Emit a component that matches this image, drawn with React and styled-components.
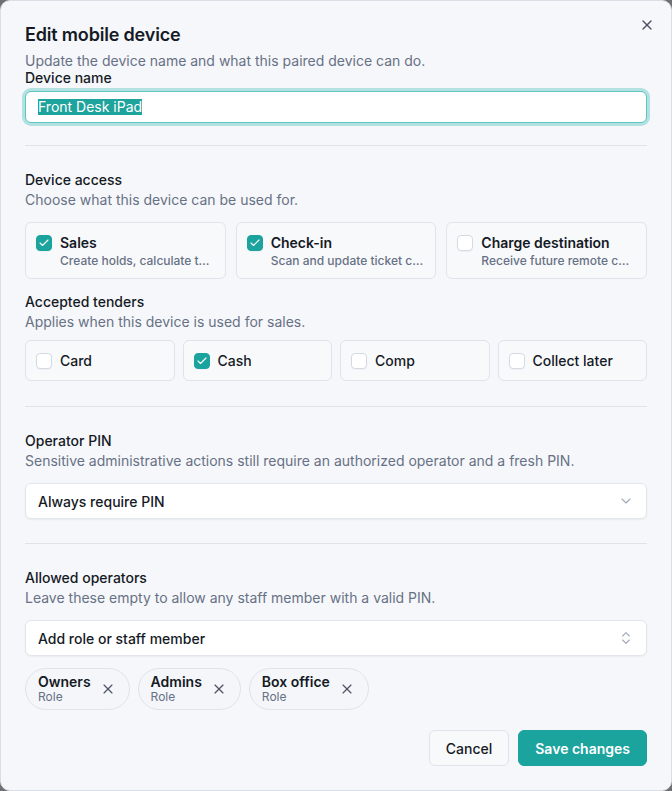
import React from "react";
import styled, { createGlobalStyle } from "styled-components";
import { X, Check, ChevronDown, ChevronsUpDown } from "lucide-react";

const GlobalStyle = createGlobalStyle`
  * { box-sizing: border-box; }
  html, body { margin: 0; padding: 0; background: #6f7073; }
  body {
    font-family: Inter, "Noto Sans", "Liberation Sans", sans-serif;
    color: #151a25;
    -webkit-font-smoothing: antialiased;
  }
`;

const teal = "#1ba39d";
const border = "#dfe3ea";
const muted = "#677185";

const Dialog = styled.div`
  position: relative;
  width: 672px;
  min-height: 791px;
  background: #f6f7fa;
  border: 1px solid #dadee6;
  border-radius: 10px;
  padding: 24px;
  display: flex;
  flex-direction: column;
`;

const CloseButton = styled.button`
  position: absolute;
  top: 16px;
  right: 16px;
  width: 16px;
  height: 16px;
  padding: 0;
  border: 0;
  background: transparent;
  color: #4b5262;
  display: flex;
  align-items: center;
  justify-content: center;
  cursor: pointer;
`;

const Title = styled.h2`
  margin: 1px 0 0;
  font-size: 18px;
  line-height: 18px;
  font-weight: 600;
  letter-spacing: -0.01em;
  color: #151a25;
`;

const Description = styled.p`
  margin: 7px 0 0;
  font-size: 14px;
  line-height: 20px;
  color: ${muted};
`;

const Label = styled.label`
  display: block;
  font-size: 14px;
  line-height: 14px;
  font-weight: 500;
  color: #151a25;
`;

const FakeInput = styled.div`
  margin-top: 6px;
  height: 32px;
  background: #fff;
  border: 1px solid #5cc7c1;
  border-radius: 6px;
  box-shadow: 0 0 0 3px rgba(38, 178, 170, 0.32);
  padding: 0 12px;
  display: flex;
  align-items: center;
  font-size: 14px;
  color: #151a25;
`;

const Selected = styled.span`
  background: #1fa39d;
  color: #fff;
  line-height: 16px;
`;

const Divider = styled.hr`
  border: 0;
  height: 1px;
  background: #e0e4ea;
  margin: ${(p) => p.$top}px 0 ${(p) => p.$bottom}px;
`;

const SectionTitle = styled.h3`
  margin: ${(p) => p.$top || 0}px 0 0;
  font-size: 14px;
  line-height: 20px;
  font-weight: 500;
  color: #151a25;
`;

const SectionDesc = styled.p`
  margin: 0;
  font-size: 14px;
  line-height: 20px;
  color: ${muted};
`;

const Grid = styled.div`
  display: grid;
  grid-template-columns: repeat(${(p) => p.$cols}, minmax(0, 1fr));
  gap: ${(p) => p.$gap}px;
  margin-top: ${(p) => p.$top}px;
`;

const OptionCard = styled.label`
  display: flex;
  align-items: ${(p) => (p.$compact ? "center" : "flex-start")};
  gap: 8px;
  min-width: 0;
  height: ${(p) => (p.$compact ? "41px" : "57px")};
  padding: ${(p) => (p.$compact ? "0 10px" : "10px 10px 9px")};
  background: #f8f9fb;
  border: 1px solid ${border};
  border-radius: 6px;
  cursor: pointer;
`;

const Box = styled.span`
  flex: none;
  width: 16px;
  height: 16px;
  margin-top: ${(p) => (p.$compact ? 0 : 2)}px;
  border-radius: 4px;
  border: 1px solid ${(p) => (p.$checked ? teal : "#d5dae2")};
  background: ${(p) => (p.$checked ? teal : "#fff")};
  color: #fff;
  display: flex;
  align-items: center;
  justify-content: center;
  box-shadow: 0 1px 1px rgba(15, 23, 42, 0.04);
`;

const OptionText = styled.span`
  display: flex;
  flex-direction: column;
  min-width: 0;
`;

const OptionTitle = styled.span`
  font-size: 14px;
  line-height: 20px;
  font-weight: ${(p) => (p.$compact ? 500 : 600)};
  color: #151a25;
  white-space: nowrap;
`;

const OptionSub = styled.span`
  font-size: 12px;
  line-height: 16px;
  font-weight: 500;
  color: ${muted};
  white-space: nowrap;
  overflow: hidden;
  text-overflow: ellipsis;
`;

const SelectBox = styled.div`
  margin-top: 12px;
  height: 36px;
  background: #fff;
  border: 1px solid #e3e7ed;
  border-radius: 6px;
  box-shadow: 0 1px 2px rgba(15, 23, 42, 0.05);
  padding: 0 12px;
  display: flex;
  align-items: center;
  justify-content: space-between;
  font-size: 14px;
  font-weight: 500;
  color: #151a25;
`;

const IconSlot = styled.span`
  display: flex;
  color: #a3abb8;
`;

const Chips = styled.div`
  display: flex;
  flex-wrap: wrap;
  gap: 8px;
  margin-top: 12px;
`;

const Chip = styled.div`
  height: 42px;
  display: flex;
  align-items: center;
  gap: 9px;
  padding: 0 13px 0 12px;
  border: 1px solid #dfe3ea;
  border-radius: 999px;
  background: #f4f6f9;
`;

const ChipText = styled.div`
  display: flex;
  flex-direction: column;
`;

const ChipTitle = styled.span`
  font-size: 14px;
  line-height: 16px;
  font-weight: 600;
  color: #151a25;
`;

const ChipSub = styled.span`
  font-size: 12px;
  line-height: 14px;
  color: ${muted};
`;

const ChipRemove = styled.button`
  border: 0;
  padding: 0;
  background: transparent;
  color: #4b5262;
  display: flex;
  cursor: pointer;
`;

const Footer = styled.div`
  margin-top: 20px;
  display: flex;
  justify-content: flex-end;
  gap: 9px;
`;

const Button = styled.button`
  height: 36px;
  padding: 0 16px;
  border-radius: 6px;
  font-family: inherit;
  font-size: 14px;
  font-weight: ${(p) => (p.$primary ? 600 : 500)};
  border: 1px solid ${(p) => (p.$primary ? teal : border)};
  background: ${(p) => (p.$primary ? teal : "#f8f9fb")};
  color: ${(p) => (p.$primary ? "#fff" : "#151a25")};
  cursor: pointer;
`;

const Checkbox = ({ checked, compact }) => (
  <Box $checked={checked} $compact={compact}>
    {checked && <Check size={12} strokeWidth={2.25} />}
  </Box>
);

const access = [
  { t: "Sales", s: "Create holds, calculate totals and take payments", c: true },
  { t: "Check-in", s: "Scan and update ticket check-ins", c: true },
  { t: "Charge destination", s: "Receive future remote charges", c: false },
];

const tenders = [
  { t: "Card", c: false },
  { t: "Cash", c: true },
  { t: "Comp", c: false },
  { t: "Collect later", c: false },
];

const operators = ["Owners", "Admins", "Box office"];

export default function App() {
  return (
    <>
      <GlobalStyle />
      <Dialog>
        <CloseButton aria-label="Close">
          <X size={16} strokeWidth={2} />
        </CloseButton>
        <Title>Edit mobile device</Title>
        <Description>Update the device name and what this paired device can do.</Description>
        <Label>Device name</Label>
        <FakeInput>
          <Selected>Front Desk iPad</Selected>
        </FakeInput>

        <Divider $top={22} $bottom={24} />

        <SectionTitle>Device access</SectionTitle>
        <SectionDesc>Choose what this device can be used for.</SectionDesc>
        <Grid $cols={3} $gap={10} $top={12}>
          {access.map((a) => (
            <OptionCard key={a.t}>
              <Checkbox checked={a.c} />
              <OptionText>
                <OptionTitle>{a.t}</OptionTitle>
                <OptionSub>{a.s}</OptionSub>
              </OptionText>
            </OptionCard>
          ))}
        </Grid>

        <SectionTitle $top={13}>Accepted tenders</SectionTitle>
        <SectionDesc>Applies when this device is used for sales.</SectionDesc>
        <Grid $cols={4} $gap={8} $top={8}>
          {tenders.map((a) => (
            <OptionCard key={a.t} $compact>
              <Checkbox checked={a.c} compact />
              <OptionTitle $compact>{a.t}</OptionTitle>
            </OptionCard>
          ))}
        </Grid>

        <Divider $top={25} $bottom={24} />

        <SectionTitle>Operator PIN</SectionTitle>
        <SectionDesc>
          Sensitive administrative actions still require an authorized operator and a fresh PIN.
        </SectionDesc>
        <SelectBox>
          <span>Always require PIN</span>
          <IconSlot>
            <ChevronDown size={16} strokeWidth={1.75} />
          </IconSlot>
        </SelectBox>

        <Divider $top={24} $bottom={24} />

        <SectionTitle>Allowed operators</SectionTitle>
        <SectionDesc>Leave these empty to allow any staff member with a valid PIN.</SectionDesc>
        <SelectBox>
          <span>Add role or staff member</span>
          <IconSlot>
            <ChevronsUpDown size={16} strokeWidth={1.75} />
          </IconSlot>
        </SelectBox>
        <Chips>
          {operators.map((o) => (
            <Chip key={o}>
              <ChipText>
                <ChipTitle>{o}</ChipTitle>
                <ChipSub>Role</ChipSub>
              </ChipText>
              <ChipRemove aria-label={`Remove ${o}`}>
                <X size={16} strokeWidth={1.75} />
              </ChipRemove>
            </Chip>
          ))}
        </Chips>

        <Footer>
          <Button>Cancel</Button>
          <Button $primary>Save changes</Button>
        </Footer>
      </Dialog>
    </>
  );
}
